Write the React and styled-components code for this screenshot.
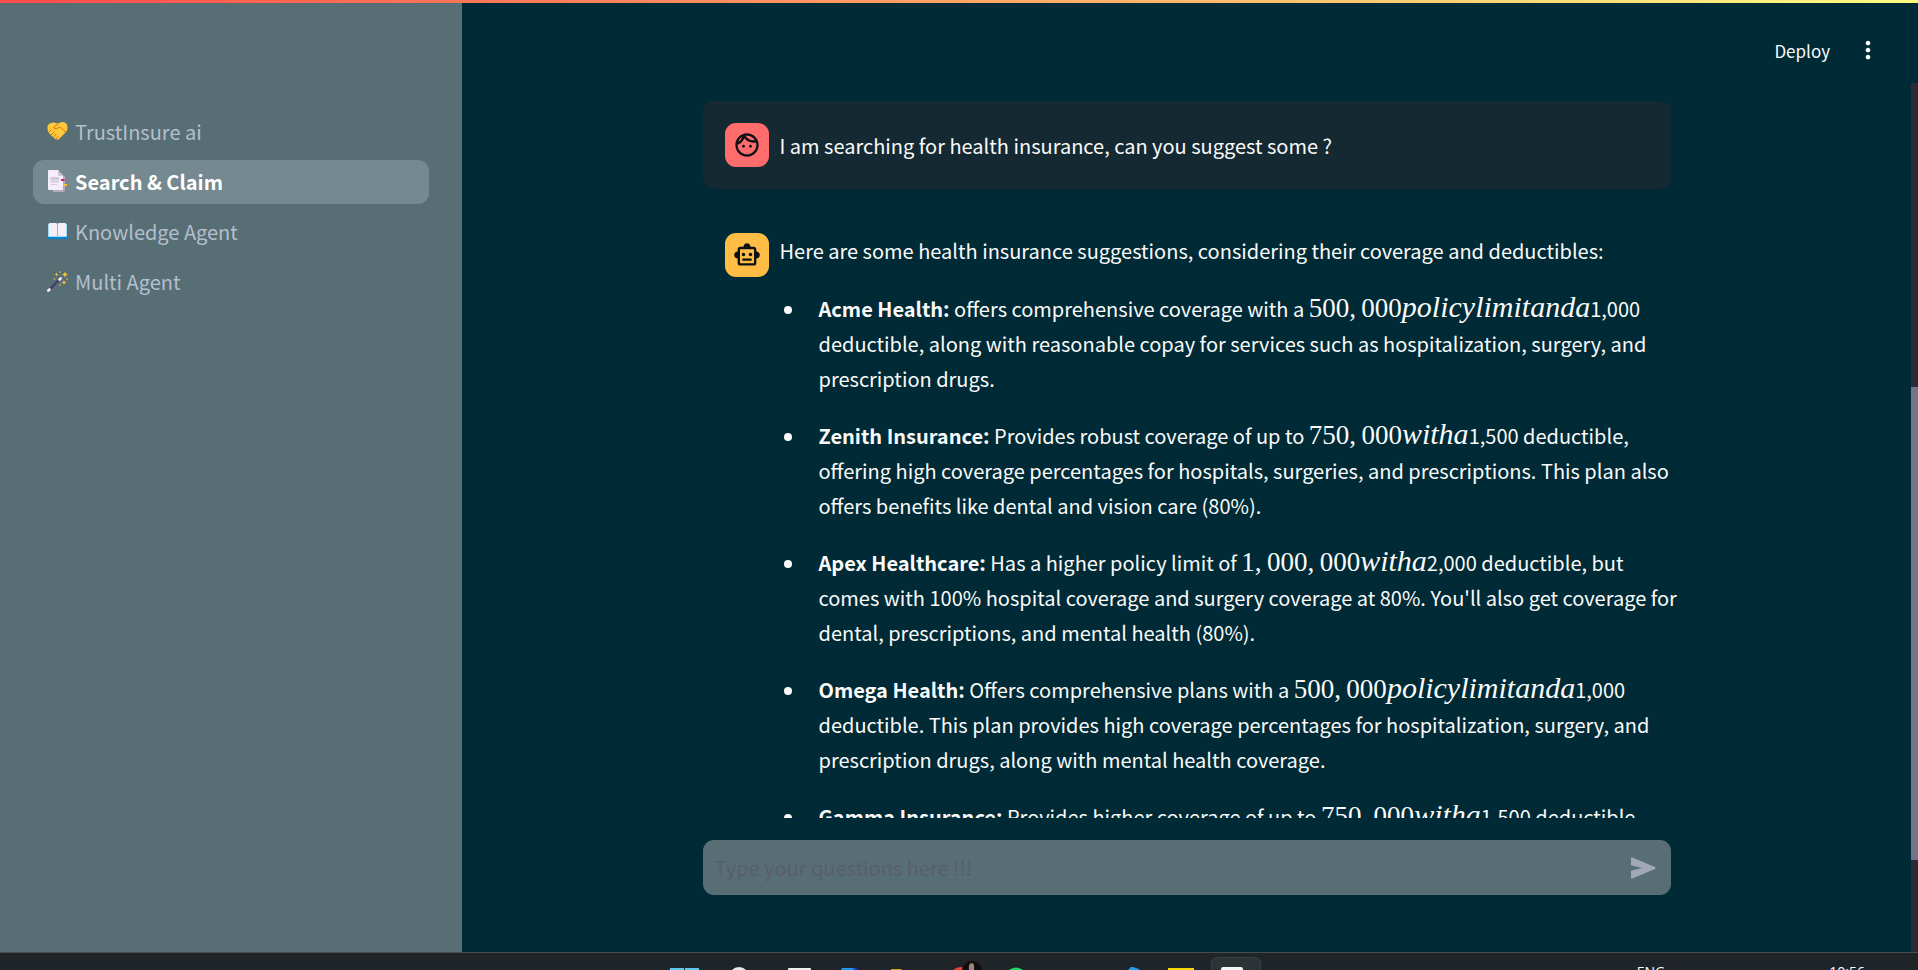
import React from "react";
import styled, { createGlobalStyle } from "styled-components";
import { MdOutlineFace, MdOutlineSmartToy, MdMoreVert } from "react-icons/md";

const sans = `"Noto Sans CJK SC", "Open Sans", sans-serif`;

const GlobalStyle = createGlobalStyle`
  *, *::before, *::after { box-sizing: border-box; }
  body {
    margin: 0;
    background: #002b36;
    color: #fafafa;
    font-family: ${sans};
    font-size: 20px;
    line-height: 35px;
  }
`;

const Screen = styled.div`
  display: flex;
  flex-direction: column;
  height: 100vh;
  overflow: hidden;
`;

const Decoration = styled.div`
  flex: none;
  height: 3px;
  background: linear-gradient(90deg, #ff4b4b, #fffd80);
`;

const Body = styled.div`
  flex: 1;
  display: flex;
  min-height: 0;
`;

const Sidebar = styled.aside`
  flex: none;
  width: 462px;
  padding: 107px 33px 0;
  background: #586e75;
`;

const NavList = styled.nav`
  display: flex;
  flex-direction: column;
  gap: 6px;
`;

const NavLink = styled.a`
  display: flex;
  align-items: center;
  gap: 7px;
  height: 44px;
  padding: 0 14px 2px;
  border-radius: 11px;
  text-decoration: none;
  color: ${(p) => (p.$active ? "#fff" : "#b3bfcd")};
  font-weight: ${(p) => (p.$active ? 700 : 400)};
  background: ${(p) => (p.$active ? "#758a90" : "transparent")};
`;

const Main = styled.main`
  flex: 1;
  display: flex;
  flex-direction: column;
  min-width: 0;
`;

const Header = styled.header`
  flex: none;
  display: flex;
  align-items: center;
  justify-content: flex-end;
  gap: 24px;
  height: 80px;
  padding: 14px 36px 0 0;
`;

const PlainButton = styled.button`
  display: flex;
  align-items: center;
  padding: 0;
  border: 0;
  background: none;
  color: inherit;
  font: inherit;
  font-size: 17px;
  cursor: pointer;
`;

const ScrollRow = styled.div`
  flex: 1;
  display: flex;
  min-height: 0;
`;

const Column = styled.div`
  flex: 1;
  display: flex;
  flex-direction: column;
  align-items: center;
  min-width: 0;
`;

const Messages = styled.div`
  flex: 1;
  display: flex;
  flex-direction: column;
  gap: 22px;
  width: 100%;
  max-width: 968px;
  min-height: 0;
  padding-top: 18px;
  overflow-x: visible;
  overflow-y: clip;
`;

const Message = styled.article`
  flex: none;
  display: flex;
  align-items: ${(p) => (p.$user ? "center" : "flex-start")};
  gap: 11px;
  padding: 22px 0 22px 22px;
  border-radius: 11px;
  background: ${(p) => (p.$user ? "#152932" : "transparent")};
`;

const Avatar = styled.div`
  flex: none;
  display: grid;
  place-items: center;
  width: 44px;
  height: 44px;
  border-radius: 11px;
  color: #0e1117;
  background: ${(p) => p.$color};
`;

const Content = styled.div`
  flex: 1;
  min-width: 0;
`;

const Paragraph = styled.p`
  margin: 0;
`;

const Plans = styled.ul`
  display: flex;
  flex-direction: column;
  gap: 22px;
  margin: 23px -12px 0 0;
  padding: 0 0 0 26px;
`;

const Plan = styled.li`
  padding-left: 13px;
`;

const MathText = styled.span`
  font-family: "Liberation Serif", serif;
  font-size: 27px;
  line-height: 1;
`;

const MathLetters = styled.i`
  font-size: 30px;
  line-height: 1;
`;

const InputArea = styled.div`
  flex: none;
  width: 100%;
  max-width: 968px;
  padding: 22px 0 57px;
`;

const InputBox = styled.form`
  display: flex;
  align-items: center;
  height: 55px;
  padding: 0 15px 0 12px;
  border-radius: 11px;
  background: #586e75;
`;

const TextInput = styled.input`
  flex: 1;
  min-width: 0;
  padding: 0;
  border: 0;
  outline: 0;
  background: none;
  color: #fafafa;
  font: inherit;
  &::placeholder { color: #585e6d; opacity: 1; }
`;

const ScrollTrack = styled.div`
  flex: none;
  display: flex;
  flex-direction: column;
  width: 7px;
  background: #2b2a35;
  &::before { content: ""; flex: 304; }
  &::after { content: ""; flex: 92; }
`;

const ScrollThumb = styled.div`
  flex: 473;
  background: #73738a;
`;

const Taskbar = styled.footer`
  flex: none;
  display: grid;
  grid-template-columns: 1fr auto 1fr;
  height: 18px;
  border-top: 1px solid #4a4c4b;
  background: #1e2427;
  overflow: hidden;
`;

const Apps = styled.div`
  grid-column: 2;
  display: flex;
`;

const AppCell = styled.svg`
  display: block;
  width: 55px;
  height: 17px;
`;

const Tray = styled.div`
  display: flex;
  justify-content: flex-end;
  gap: 164px;
  padding: 9px 53px 0 0;
  font-family: "Open Sans", sans-serif;
  font-size: 14px;
  line-height: 20px;
  color: #fff;
`;

const Handshake = () => (
  <svg width="21" height="20" viewBox="0 0 21 20" aria-hidden="true">
    <path d="M1 4Q3 1 7 1.500L10.500 2.500L15 1Q20 1 20.500 6Q21 10 18 12L12 18Q10 20 7 17L2 12Q-.5 8 1 4Z" fill="#ffc83d" />
    <path d="M11 3L7 6Q7 9 11 7L13 6L19 11M2 11L4 9M4 14L7 11M7 16L9 13M9 18L11 15.500" fill="none" stroke="#d67d00" strokeWidth="1" strokeLinecap="round" />
  </svg>
);

const Bookmarks = () => (
  <svg width="21" height="22" viewBox="0 0 21 22" aria-hidden="true">
    <path d="M5 3H14L18 7V20Q18 22 16 22H6Z" fill="#b4acbc" />
    <path d="M1 1Q1 0 2 0H11L16 6V19Q16 20 15 20H2Q1 20 1 19Z" fill="#f3eef8" />
    <path d="M11 0V5Q11 6 12 6H16Z" fill="#cdc4d6" />
    <path d="M3.500 7H12V10H3.500ZM3.500 10.500H12V12.500H3.500ZM3.500 14H10V15H3.500Z" fill="#d3cbdb" />
    <path d="M14 9H17.500V11H14Z" fill="#e0128a" />
    <path d="M16 14H20V16H17.500Z" fill="#fcc221" />
  </svg>
);

const Book = () => (
  <svg width="21" height="18" viewBox="0 0 21 18" aria-hidden="true">
    <path d="M0 3H21V17H12L10.500 18L9 17H0Z" fill="#0084ce" />
    <path d="M1 2H20V15H1Z" fill="#50c8f5" />
    <path d="M1.500 2Q2 .8 4 1H8.500Q10 1 10.500 2Q11 1 12.500 1H17Q19 .8 19.500 2V14.500H12Q11 14.500 10.500 15.500Q10 14.500 9 14.500H1.500Z" fill="#f3eef8" />
    <path d="M10.500 2V15" stroke="#b4acbc" strokeWidth="1" />
  </svg>
);

const Wand = () => (
  <svg width="21" height="21" viewBox="0 0 21 21" aria-hidden="true">
    <path d="M1.500 19.500L13.500 7.500" stroke="#433b6b" strokeWidth="2.400" strokeLinecap="round" />
    <path d="M1.300 19.700L2.500 18.500M12.500 8.500L13.700 7.300" stroke="#f3eef8" strokeWidth="2.600" strokeLinecap="round" />
    <path d="M18 .5L18.900 2.600L21 3.500L18.900 4.400L18 6.500L17.100 4.400L15 3.500L17.100 2.600ZM9.500 1.500L10.100 2.900L11.500 3.500L10.100 4.100L9.500 5.500L8.900 4.100L7.500 3.500L8.900 2.900ZM17 9L17.700 10.800L19.500 11.500L17.700 12.200L17 14L16.300 12.200L14.500 11.500L16.300 10.800Z" fill="#fcc23c" />
    <circle cx="13" cy="1" r=".8" fill="#fcc23c" />
    <circle cx="7.500" cy="8" r=".8" fill="#fcc23c" />
    <circle cx="20" cy="8" r=".8" fill="#fcc23c" />
    <circle cx="13" cy="14" r=".8" fill="#fcc23c" />
  </svg>
);

const SendIcon = () => (
  <svg width="25" height="22" viewBox="0 0 25 22" aria-hidden="true">
    <path d="M0 1.300Q0 0 1.300 .5L24 10Q25 11 24 12L1.300 21.500Q0 22 0 20.700V14.500Q0 13.700 .8 13.500L11 11L.8 8.500Q0 8.300 0 7.500Z" fill="#a3a8b8" />
  </svg>
);

const nav = [
  { label: "TrustInsure ai", icon: <Handshake /> },
  { label: "Search & Claim", icon: <Bookmarks />, active: true },
  { label: "Knowledge Agent", icon: <Book /> },
  { label: "Multi Agent", icon: <Wand /> },
];

const plans = [
  {
    name: "Acme Health:",
    before: "offers comprehensive coverage with a",
    amount: "500,\u2009000",
    letters: "policylimitanda",
    after: "1,000 deductible, along with reasonable copay for services such as hospitalization, surgery, and prescription drugs.",
  },
  {
    name: "Zenith Insurance:",
    before: "Provides robust coverage of up to",
    amount: "750,\u2009000",
    letters: "witha",
    after: "1,500 deductible, offering high coverage percentages for hospitals, surgeries, and prescriptions. This plan also offers benefits like dental and vision care (80%).",
  },
  {
    name: "Apex Healthcare:",
    before: "Has a higher policy limit of",
    amount: "1,\u2009000,\u2009000",
    letters: "witha",
    after: "2,000 deductible, but comes with 100% hospital coverage and surgery coverage at 80%. You'll also get coverage for dental, prescriptions, and mental health (80%).",
  },
  {
    name: "Omega Health:",
    before: "Offers comprehensive plans with a",
    amount: "500,\u2009000",
    letters: "policylimitanda",
    after: "1,000 deductible. This plan provides high coverage percentages for hospitalization, surgery, and prescription drugs, along with mental health coverage.",
  },
  {
    name: "Gamma Insurance:",
    before: "Provides higher coverage of up to",
    amount: "750,\u2009000",
    letters: "witha",
    after: "1,500 deductible,",
  },
];

const apps = [
  <path d="M13 15H27V17H13ZM28 15H42V17H28Z" fill="#5cc8f0" />,
  <circle cx="27" cy="24" r="8.500" fill="none" stroke="#e8e8e8" strokeWidth="3" />,
  <path d="M21 17V16Q21 15 22 15H43Q44 15 44 16V17Z" fill="#eee" />,
  <g><path d="M19 17L20 15H32L36 17Z" fill="#1d9bf0" /><path d="M31 15H34L36 17H32Z" fill="#1a3fd0" /></g>,
  <path d="M14 17V16H24L25 17Z" fill="#d9a210" />,
  <g><circle cx="29" cy="26" r="12" fill="#ea4335" /><circle cx="40" cy="18" r="10" fill="#110d0c" /><path d="M37 17Q36 10 40 10Q43 11 42 17Z" fill="#9a8880" /></g>,
  <circle cx="29" cy="26" r="11.500" fill="#25d366" />,
  null,
  <path d="M31 17L34 14H36L42 16V17Z" fill="#1f9cf0" />,
  <path d="M16 15H42V17H16Z" fill="#f5d800" />,
  <g><rect x="4.500" y="4.500" width="49" height="40" rx="5" fill="#2c3336" stroke="#3a4042" /><path d="M14 17V16Q14 14 16 14H34Q36 14 36 16V17Z" fill="#f4f4f4" /></g>,
];

export default function App() {
  return (
    <Screen>
      <GlobalStyle />
      <Decoration />
      <Body>
        <Sidebar>
          <NavList aria-label="Pages">
            {nav.map((n) => (
              <NavLink key={n.label} href="#" $active={n.active} aria-current={n.active ? "page" : undefined}>
                {n.icon}
                <span>{n.label}</span>
              </NavLink>
            ))}
          </NavList>
        </Sidebar>
        <Main>
          <Header>
            <PlainButton type="button">Deploy</PlainButton>
            <PlainButton type="button" aria-label="Main menu">
              <MdMoreVert size={28} />
            </PlainButton>
          </Header>
          <ScrollRow>
            <Column>
              <Messages>
                <Message $user>
                  <Avatar $color="#ff6c6c"><MdOutlineFace size={28} /></Avatar>
                  <Content>
                    <Paragraph>I am searching for health insurance, can you suggest some ?</Paragraph>
                  </Content>
                </Message>
                <Message>
                  <Avatar $color="#ffbd45"><MdOutlineSmartToy size={28} /></Avatar>
                  <Content>
                    <Paragraph>Here are some health insurance suggestions, considering their coverage and deductibles:</Paragraph>
                    <Plans>
                      {plans.map((p) => (
                        <Plan key={p.name}>
                          <strong>{p.name}</strong> {p.before}{" "}
                          <MathText>{p.amount}<MathLetters>{p.letters}</MathLetters></MathText>
                          {p.after}
                        </Plan>
                      ))}
                    </Plans>
                  </Content>
                </Message>
              </Messages>
              <InputArea>
                <InputBox onSubmit={(e) => e.preventDefault()}>
                  <TextInput type="text" aria-label="Type your questions here" placeholder="Type your questions here !!!" />
                  <PlainButton type="submit" aria-label="Send"><SendIcon /></PlainButton>
                </InputBox>
              </InputArea>
            </Column>
            <ScrollTrack><ScrollThumb /></ScrollTrack>
          </ScrollRow>
        </Main>
      </Body>
      <Taskbar>
        <Apps>
          {apps.map((shape, i) => (
            <AppCell key={i} viewBox="0 0 55 17" aria-hidden="true">{shape}</AppCell>
          ))}
        </Apps>
        <Tray><span>ENG</span><span>10:56</span></Tray>
      </Taskbar>
    </Screen>
  );
}
